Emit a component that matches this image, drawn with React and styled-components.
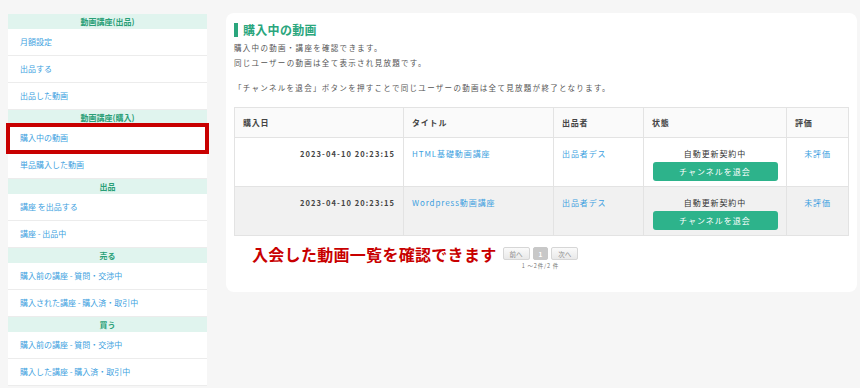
import React from 'react';
import styled, { createGlobalStyle } from 'styled-components';

const GlobalStyle = createGlobalStyle`
body {
  margin: 0;
  background: #f6f6f6;
  font-family: "Noto Sans CJK JP", "Noto Sans", sans-serif;
}
`;

const Page = styled.div`
display: flex;
align-items: flex-start;
gap: 19px;
padding: 14px 0 0 8px;
width: 860px;
height: 388px;
box-sizing: border-box;
overflow: hidden;
`;

const Sidebar = styled.nav`
width: 199px;
flex-shrink: 0;
background: #fff;
display: flex;
flex-direction: column;
`;

const SideHead = styled.div`
height: 15px;
line-height: 15px;
background: #e0f4ee;
color: #2a9f77;
font-size: 8px;
font-weight: bold;
text-align: center;
`;

const SideItem = styled.a`
display: block;
height: 27px;
line-height: 26px;
box-sizing: border-box;
padding-left: 12px;
font-size: 8px;
color: #3d9fe0;
text-decoration: none;
border-bottom: 1px solid #ececec;
outline: ${(p) => (p.$active ? '4px solid #c80000' : 'none')};
outline-offset: -2px;
position: relative;
`;

const Card = styled.main`
width: 631px;
height: 279px;
margin-top: -1px;
box-sizing: border-box;
background: #fff;
border-radius: 8px;
padding: 10px 8px;
`;

const Title = styled.h2`
margin: 0;
font-size: 12px;
line-height: 14px;
color: #2aa67d;
font-weight: bold;
letter-spacing: 0.3px;
border-left: 4px solid #2aa67d;
padding-left: 5px;
`;

const Desc = styled.p`
margin: ${(p) => p.$gap || '0'};
font-size: 7.5px;
line-height: 14.5px;
letter-spacing: 1.3px;
color: #555;
`;

const Table = styled.table`
margin-top: 11px;
width: 615px;
border-collapse: collapse;
table-layout: fixed;
font-size: 8px;
`;

const Th = styled.th`
height: 30px;
box-sizing: border-box;
background: #fafafa;
border: 1px solid #e3e3e3;
text-align: left;
padding: 0 8px;
color: #444;
font-weight: bold;
letter-spacing: 0.8px;
`;

const Tr = styled.tr`
background: ${(p) => (p.$alt ? '#f1f1f1' : '#fff')};
`;

const Td = styled.td`
height: 49px;
box-sizing: border-box;
border: 1px solid #e3e3e3;
vertical-align: top;
padding: 10px 8px 0;
text-align: ${(p) => p.$align || 'left'};
line-height: 11px;
letter-spacing: 0.9px;
color: #444;
`;

const DateText = styled.span`
font-weight: bold;
font-size: 7.5px;
letter-spacing: 1.1px;
color: #444;
`;

const LinkText = styled.a`
color: #3d9fe0;
text-decoration: none;
`;

const Status = styled.div`
color: #333;
`;

const LeaveButton = styled.button`
display: block;
margin: 3px auto 0;
width: 125px;
height: 19px;
border: none;
border-radius: 3px;
background: #2db38b;
color: #fff;
font-family: inherit;
font-size: 8px;
letter-spacing: 1px;
cursor: pointer;
`;

const Bottom = styled.div`
display: flex;
align-items: flex-start;
gap: 6px;
padding: 8px 0 0 18px;
`;

const Note = styled.div`
font-size: 16px;
line-height: 20px;
font-weight: bold;
color: #c80000;
letter-spacing: 0.3px;
`;

const Pager = styled.div`
display: flex;
flex-direction: column;
align-items: center;
padding-top: 3px;
`;

const PagerRow = styled.div`
display: flex;
gap: 3px;
`;

const PageBtn = styled.span`
height: 13px;
line-height: 12px;
box-sizing: border-box;
padding: 0 ${(p) => (p.$current ? '5px' : '6px')};
border: 1px solid ${(p) => (p.$current ? '#c8c8c8' : '#d6d6d6')};
border-radius: 2px;
background: ${(p) => (p.$current ? '#c8c8c8' : 'linear-gradient(#fafafa, #e9e9e9)')};
color: ${(p) => (p.$current ? '#fff' : '#888')};
font-size: 6.5px;
font-weight: ${(p) => (p.$current ? 'bold' : 'normal')};
`;

const PagerInfo = styled.div`
margin-top: 2px;
font-size: 5.5px;
color: #777;
letter-spacing: 0.8px;
`;

const menu = [
  { head: '動画講座(出品)', items: ['月額設定', '出品する', '出品した動画'] },
  { head: '動画講座(購入)', items: ['購入中の動画', '単品購入した動画'] },
  { head: '出品', items: ['講座 を出品する', '講座 - 出品中'] },
  { head: '売る', items: ['購入前の講座 - 質問・交渉中', '購入された講座 - 購入済・取引中'] },
  { head: '買う', items: ['購入前の講座 - 質問・交渉中', '購入した講座 - 購入済・取引中'] },
];

const rows = [
  { date: '2023-04-10 20:23:15', title: 'HTML基礎動画講座' },
  { date: '2023-04-10 20:23:15', title: 'Wordpress動画講座' },
];

export default function App() {
  return (
    <Page>
      <GlobalStyle />
      <Sidebar>
        {menu.map((group) => (
          <React.Fragment key={group.head}>
            <SideHead>{group.head}</SideHead>
            {group.items.map((item) => (
              <SideItem key={item} href="#" $active={item === '購入中の動画'}>
                {item}
              </SideItem>
            ))}
          </React.Fragment>
        ))}
      </Sidebar>
      <Card>
        <Title>購入中の動画</Title>
        <Desc $gap="4px 0 0">
          購入中の動画・講座を確認できます。
          <br />
          同じユーザーの動画は全て表示され見放題です。
        </Desc>
        <Desc $gap="11px 0 0">
          「チャンネルを退会」ボタンを押すことで同じユーザーの動画は全て見放題が終了となります。
        </Desc>
        <Table>
          <thead>
            <tr>
              <Th style={{ width: 169 }}>購入日</Th>
              <Th style={{ width: 150 }}>タイトル</Th>
              <Th style={{ width: 90 }}>出品者</Th>
              <Th style={{ width: 143 }}>状態</Th>
              <Th>評価</Th>
            </tr>
          </thead>
          <tbody>
            {rows.map((r, i) => (
              <Tr key={r.title} $alt={i % 2 === 1}>
                <Td $align="right">
                  <DateText>{r.date}</DateText>
                </Td>
                <Td>
                  <LinkText href="#">{r.title}</LinkText>
                </Td>
                <Td>
                  <LinkText href="#">出品者デス</LinkText>
                </Td>
                <Td $align="center">
                  <Status>自動更新契約中</Status>
                  <LeaveButton>チャンネルを退会</LeaveButton>
                </Td>
                <Td $align="center">
                  <LinkText href="#">未評価</LinkText>
                </Td>
              </Tr>
            ))}
          </tbody>
        </Table>
        <Bottom>
          <Note>入会した動画一覧を確認できます</Note>
          <Pager>
            <PagerRow>
              <PageBtn>前へ</PageBtn>
              <PageBtn $current>1</PageBtn>
              <PageBtn>次へ</PageBtn>
            </PagerRow>
            <PagerInfo>1 ～2件/2 件</PagerInfo>
          </Pager>
        </Bottom>
      </Card>
    </Page>
  );
}
